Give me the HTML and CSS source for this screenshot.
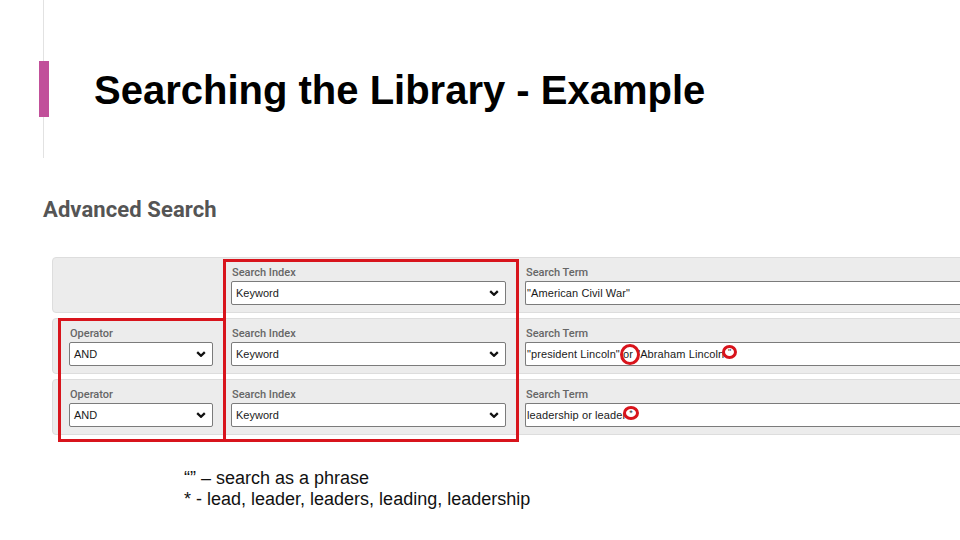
FILE: index.html
```html
<!DOCTYPE html>
<html lang="en">
<head>
<meta charset="utf-8">
<title>Searching the Library - Example</title>
<link rel="stylesheet" href="styles.css">
</head>
<body>
<div class="slide">
  <header class="header">
    <div class="rail">
      <span class="rail-line rail-top"></span>
      <span class="rail-bar"></span>
      <span class="rail-line rail-bottom"></span>
    </div>
    <h1 class="title">Searching the Library - Example</h1>
  </header>

  <h2 class="adv">Advanced Search</h2>

  <div class="form">
    <div class="row">
      <div class="field op"></div>
      <div class="field idx">
        <span class="label">Search Index</span>
        <div class="select"><span>Keyword</span><svg class="chev" viewBox="0 0 10 6" width="10" height="6"><path d="M1.2 1.2 L5 4.8 L8.8 1.2" fill="none" stroke="#111" stroke-width="2.3"/></svg></div>
      </div>
      <div class="field term">
        <span class="label">Search Term</span>
        <div class="input">"American Civil War"</div>
      </div>
    </div>

    <div class="row">
      <div class="field op">
        <span class="label">Operator</span>
        <div class="select"><span>AND</span><svg class="chev" viewBox="0 0 10 6" width="10" height="6"><path d="M1.2 1.2 L5 4.8 L8.8 1.2" fill="none" stroke="#111" stroke-width="2.3"/></svg></div>
      </div>
      <div class="field idx">
        <span class="label">Search Index</span>
        <div class="select"><span>Keyword</span><svg class="chev" viewBox="0 0 10 6" width="10" height="6"><path d="M1.2 1.2 L5 4.8 L8.8 1.2" fill="none" stroke="#111" stroke-width="2.3"/></svg></div>
      </div>
      <div class="field term">
        <span class="label">Search Term</span>
        <div class="input">"president Lincoln" or "Abraham Lincoln"</div>
      </div>
    </div>

    <div class="row">
      <div class="field op">
        <span class="label">Operator</span>
        <div class="select"><span>AND</span><svg class="chev" viewBox="0 0 10 6" width="10" height="6"><path d="M1.2 1.2 L5 4.8 L8.8 1.2" fill="none" stroke="#111" stroke-width="2.3"/></svg></div>
      </div>
      <div class="field idx">
        <span class="label">Search Index</span>
        <div class="select"><span>Keyword</span><svg class="chev" viewBox="0 0 10 6" width="10" height="6"><path d="M1.2 1.2 L5 4.8 L8.8 1.2" fill="none" stroke="#111" stroke-width="2.3"/></svg></div>
      </div>
      <div class="field term">
        <span class="label">Search Term</span>
        <div class="input">leadership or leader*</div>
      </div>
    </div>

    <div class="mark box-index"></div>
    <div class="mark box-op"></div>
    <div class="mark ring ring-or"></div>
    <div class="mark ring ring-quote">"</div>
    <div class="mark ring ring-star">*</div>
  </div>

  <div class="notes">
    <p>“” – search as a phrase</p>
    <p>* - lead, leader, leaders, leading, leadership</p>
  </div>
</div>
</body>
</html>
```

FILE: styles.css
```css
* { box-sizing: border-box; }

html, body {
  margin: 0;
  padding: 0;
  background: #fff;
  overflow: hidden;
}

.slide {
  width: 960px;
  height: 540px;
  overflow: hidden;
  font-family: "Liberation Sans", Arial, sans-serif;
  color: #000;
}

/* ---------- header ---------- */
.header {
  display: flex;
  align-items: flex-start;
  height: 158px;
  margin-left: 38px;
}

.rail {
  display: flex;
  flex-direction: column;
  width: 11px;
  height: 158px;
}

.rail-line {
  display: block;
  width: 1px;
  margin-left: 5px;
  background: #e2e2e2;
}

.rail-top { height: 61px; }
.rail-bottom { flex: 1; }

.rail-bar {
  display: block;
  width: 10px;
  height: 56px;
  margin-left: 1px;
  background: #c1509a;
}

.title {
  margin: 0 0 0 45px;
  padding-top: 67px;
  font-size: 40px;
  line-height: 46px;
  font-weight: 700;
  color: #000;
  white-space: nowrap;
}

/* ---------- advanced search ---------- */
.adv {
  margin: 39px 0 0 43px;
  font-family: Roboto, "Liberation Sans", sans-serif;
  font-size: 22px;
  line-height: 26px;
  font-weight: 700;
  color: #555;
  letter-spacing: 0.1px;
}

.form {
  position: relative;
  margin: 34px 0 0 52px;
  width: 930px;
}

.row {
  display: flex;
  height: 56px;
  padding: 8px 0 7px 16px;
  margin-bottom: 5px;
  background: #ececec;
  border: 1px solid #dddddd;
  border-radius: 4px;
}

.row:last-of-type { margin-bottom: 0; }

.field {
  display: flex;
  flex-direction: column;
}

.op { width: 144px; flex: none; }
.idx { width: 275px; flex: none; margin-left: 18px; }
.term { flex: 1; margin-left: 19px; }

.label {
  display: block;
  height: 13px;
  margin-bottom: 2px;
  padding-left: 1px;
  font-family: Roboto, "Liberation Sans", sans-serif;
  font-size: 11px;
  line-height: 13px;
  font-weight: 500;
  color: #666;
}

.select, .input {
  height: 24px;
  background: #fff;
  border: 1px solid #7b7b7b;
  border-radius: 2px;
  font-family: "Liberation Sans", Arial, sans-serif;
  font-size: 11px;
  color: #1a1a1a;
  display: flex;
  align-items: center;
  white-space: nowrap;
}

.select {
  justify-content: space-between;
  padding: 0 6px 0 4px;
}

.input {
  padding-left: 1px;
  border-right: none;
  border-radius: 2px 0 0 2px;
  letter-spacing: 0.1px;
}

.chev { display: block; }

/* ---------- annotations ---------- */
.mark {
  position: absolute;
  border: 3px solid #d8141c;
}

.box-index {
  left: 171px;
  top: 2px;
  width: 296px;
  height: 183px;
}

.box-op {
  left: 6px;
  top: 61px;
  width: 168px;
  height: 124px;
}

.ring {
  border-radius: 50%;
  border-width: 3px;
}

.ring-or {
  left: 568px;
  top: 87px;
  width: 20px;
  height: 21px;
}

.ring-quote,
.ring-star {
  background: #fff;
  display: flex;
  align-items: center;
  justify-content: center;
  font-family: "Liberation Sans", Arial, sans-serif;
  font-size: 9px;
  line-height: 1;
  color: #333;
}

.ring-quote {
  left: 670px;
  top: 88px;
  width: 15px;
  height: 14px;
}

.ring-star {
  left: 571px;
  top: 149px;
  width: 16px;
  height: 14px;
}

/* ---------- notes ---------- */
.notes {
  margin: 33px 0 0 184px;
  font-size: 18px;
  line-height: 21px;
  color: #111;
}

.notes p { margin: 0; }
```
